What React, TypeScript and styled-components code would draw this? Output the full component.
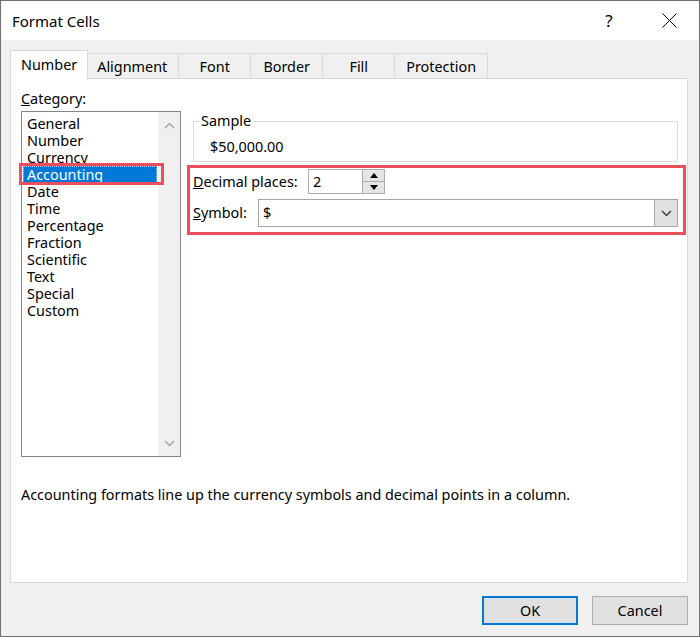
import React from "react";
import styled, { createGlobalStyle } from "styled-components";

const GlobalStyle = createGlobalStyle`
  html, body {
    margin: 0;
    padding: 0;
    background: #fff;
  }
  body {
    font-family: "Noto Sans", "Segoe UI", sans-serif;
    font-size: 14.4px;
    color: #000;
  }
  * {
    box-sizing: border-box;
  }
`;

const Window = styled.div`
  width: 700px;
  height: 637px;
  border: 1px solid #6f6f6f;
  display: flex;
  flex-direction: column;
  background: #f0f0f0;
`;

const TitleBar = styled.div`
  height: 39px;
  background: #fff;
  display: flex;
  align-items: center;
  padding-left: 11px;
`;

const Title = styled.div`
  flex: 1;
  font-size: 15px;
`;

const CaptionButton = styled.div`
  width: 60px;
  height: 39px;
  display: flex;
  align-items: center;
  justify-content: center;
  font-size: 17px;
`;

const Body = styled.div`
  flex: 1;
  display: flex;
  flex-direction: column;
  padding: 10px 11px 0 9px;
`;

const TabStrip = styled.div`
  height: 28px;
  display: flex;
  align-items: flex-end;
  padding-left: 2px;
`;

const Tab = styled.div<{ $active?: boolean }>`
  position: relative;
  min-width: 73px;
  display: flex;
  align-items: center;
  justify-content: center;
  border: 1px solid #d9d9d9;
  border-bottom: none;
  height: ${({ $active }) => ($active ? "29px" : "25px")};
  padding: ${({ $active }) => ($active ? "0 10px 2px" : "0 11px")};
  margin: ${({ $active }) => ($active ? "0 -2px -1px" : "0 0 0 -1px")};
  background: ${({ $active }) => ($active ? "#fff" : "#f0f0f0")};
  z-index: ${({ $active }) => ($active ? 1 : 0)};
`;

const Panel = styled.div`
  height: 505px;
  background: #fff;
  border: 1px solid #d9d9d9;
  padding: 10px 1px 0 10px;
  display: flex;
  flex-direction: column;
`;

const Columns = styled.div`
  display: flex;
  gap: 6px;
`;

const LeftColumn = styled.div`
  flex: none;
  width: 160px;
  display: flex;
  flex-direction: column;
`;

const FieldLabel = styled.div<{ $width?: number }>`
  line-height: 20px;
  white-space: nowrap;
  ${({ $width }) => ($width ? `width: ${$width}px; flex: none;` : "")}
`;

const ListBox = styled.div`
  margin-top: 2px;
  height: 346px;
  border: 1px solid #828790;
  display: flex;
`;

const ListItems = styled.div`
  flex: 1;
  padding: 3px 1px;
`;

const ListItem = styled.div<{ $selected?: boolean }>`
  position: relative;
  height: 17px;
  line-height: 17px;
  padding-left: 4px;
  background: ${({ $selected }) => ($selected ? "#0078d7" : "transparent")};
  color: ${({ $selected }) => ($selected ? "#fff" : "#000")};
  outline: ${({ $selected }) => ($selected ? "1px dotted #9fd0ff" : "none")};
  outline-offset: -1px;
  ${({ $selected }) =>
    $selected &&
    `&::after {
      content: "";
      position: absolute;
      left: -4px;
      right: -7px;
      top: -3px;
      bottom: -2px;
      border: 3px solid #e94f5f;
    }`}
`;

const ScrollBar = styled.div`
  width: 22px;
  background: #f0f0f0;
  display: flex;
  flex-direction: column;
  justify-content: space-between;
`;

const ScrollButton = styled.div`
  height: 26px;
  display: flex;
  align-items: center;
  justify-content: center;
`;

const RightColumn = styled.div`
  flex: 1;
  min-width: 0;
  margin-top: 22px;
  display: flex;
  flex-direction: column;
`;

const SampleGroup = styled.fieldset`
  margin: 0 8px 0 6px;
  padding: 6px 16px 4px;
  border: 1px solid #dcdcdc;
  min-width: 0;
  legend {
    padding: 0 1px;
    margin-left: -10px;
    line-height: 20px;
  }
`;

const SampleValue = styled.div`
  line-height: 20px;
`;

const Highlight = styled.div`
  margin-top: 3px;
  border: 3px solid #e94f5f;
  padding: 1px 5px 5px 3px;
  display: flex;
  flex-direction: column;
  gap: 5px;
`;

const Row = styled.div`
  display: flex;
  align-items: center;
`;

const SpinBox = styled.div`
  width: 77px;
  height: 25px;
  border: 1px solid #abadb3;
  display: flex;
`;

const SpinText = styled.div`
  flex: 1;
  line-height: 23px;
  padding-left: 4px;
`;

const SpinButtons = styled.div`
  width: 22px;
  display: flex;
  flex-direction: column;
  border-left: 1px solid #acacac;
`;

const SpinButton = styled.div`
  flex: 1;
  background: #e5e5e5;
  display: flex;
  align-items: center;
  justify-content: center;
  & + & {
    border-top: 1px solid #acacac;
  }
`;

const Select = styled.div`
  flex: 1;
  height: 28px;
  border: 1px solid #a6a6a6;
  display: flex;
  align-items: stretch;
`;

const SelectValue = styled.div`
  flex: 1;
  line-height: 26px;
  padding-left: 4px;
`;

const DropButton = styled.div`
  width: 23px;
  background: #e1e1e1;
  border-left: 1px solid #adadad;
  display: flex;
  align-items: center;
  justify-content: center;
`;

const Description = styled.div`
  margin-top: 28px;
  line-height: 20px;
`;

const Footer = styled.div`
  display: flex;
  justify-content: flex-end;
  gap: 14px;
  margin-top: 13px;
`;

const Button = styled.div<{ $default?: boolean }>`
  width: 96px;
  height: 29px;
  display: flex;
  align-items: center;
  justify-content: center;
  background: #e1e1e1;
  border: ${({ $default }) => ($default ? "2px solid #0078d7" : "1px solid #adadad")};
`;

const Chevron = ({ up, color }: { up?: boolean; color: string }) => (
  <svg width="11" height="7" viewBox="0 0 11 7">
    <path
      d={up ? "M1 6 L5.5 1.5 L10 6" : "M1 1 L5.5 5.5 L10 1"}
      fill="none"
      stroke={color}
      strokeWidth="1.5"
    />
  </svg>
);

const Triangle = ({ up }: { up?: boolean }) => (
  <svg width="8" height="5" viewBox="0 0 8 5">
    <path d={up ? "M0 5 L4 0 L8 5 Z" : "M0 0 L4 5 L8 0 Z"} fill="#000" />
  </svg>
);

const tabs = ["Number", "Alignment", "Font", "Border", "Fill", "Protection"];
const categories = [
  "General",
  "Number",
  "Currency",
  "Accounting",
  "Date",
  "Time",
  "Percentage",
  "Fraction",
  "Scientific",
  "Text",
  "Special",
  "Custom",
];

export default function App() {
  return (
    <>
      <GlobalStyle />
      <Window>
        <TitleBar>
          <Title>Format Cells</Title>
          <CaptionButton>?</CaptionButton>
          <CaptionButton>
            <svg width="15" height="15" viewBox="0 0 15 15">
              <path d="M0.5 0.5 L14.5 14.5 M14.5 0.5 L0.5 14.5" stroke="#000" strokeWidth="1" />
            </svg>
          </CaptionButton>
        </TitleBar>
        <Body>
          <TabStrip>
            {tabs.map((t, i) => (
              <Tab key={t} $active={i === 0}>
                {t}
              </Tab>
            ))}
          </TabStrip>
          <Panel>
            <Columns>
              <LeftColumn>
                <FieldLabel>
                  <u>C</u>ategory:
                </FieldLabel>
                <ListBox>
                  <ListItems>
                    {categories.map((c) => (
                      <ListItem key={c} $selected={c === "Accounting"}>
                        {c}
                      </ListItem>
                    ))}
                  </ListItems>
                  <ScrollBar>
                    <ScrollButton>
                      <Chevron up color="#a6a6a6" />
                    </ScrollButton>
                    <ScrollButton>
                      <Chevron color="#a6a6a6" />
                    </ScrollButton>
                  </ScrollBar>
                </ListBox>
              </LeftColumn>
              <RightColumn>
                <SampleGroup>
                  <legend>Sample</legend>
                  <SampleValue>$50,000.00</SampleValue>
                </SampleGroup>
                <Highlight>
                  <Row>
                    <FieldLabel $width={115}>
                      <u>D</u>ecimal places:
                    </FieldLabel>
                    <SpinBox>
                      <SpinText>2</SpinText>
                      <SpinButtons>
                        <SpinButton>
                          <Triangle up />
                        </SpinButton>
                        <SpinButton>
                          <Triangle />
                        </SpinButton>
                      </SpinButtons>
                    </SpinBox>
                  </Row>
                  <Row>
                    <FieldLabel $width={65}>
                      <u>S</u>ymbol:
                    </FieldLabel>
                    <Select>
                      <SelectValue>$</SelectValue>
                      <DropButton>
                        <Chevron color="#404040" />
                      </DropButton>
                    </Select>
                  </Row>
                </Highlight>
              </RightColumn>
            </Columns>
            <Description>
              Accounting formats line up the currency symbols and decimal points in a column.
            </Description>
          </Panel>
          <Footer>
            <Button $default>OK</Button>
            <Button>Cancel</Button>
          </Footer>
        </Body>
      </Window>
    </>
  );
}
